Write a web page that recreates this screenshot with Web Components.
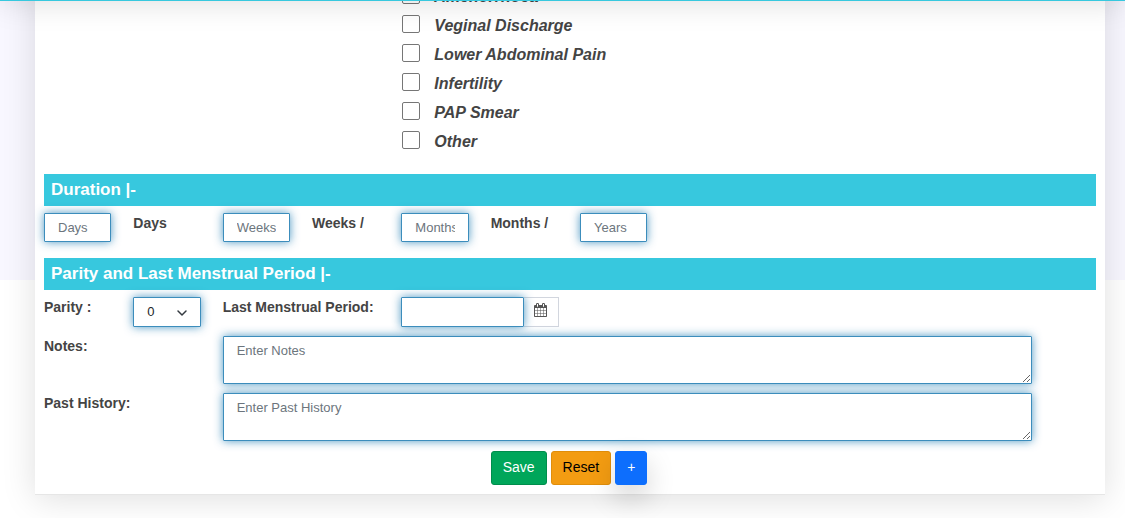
<!DOCTYPE html>
<html lang="en">
<head>
<meta charset="utf-8">
<title>Patient history</title>
<style>
body{margin:0;font:14px/20px "Liberation Sans",Arial,sans-serif;color:#444;background:linear-gradient(#f8f7ff,#f8f7ff) 0 0/100% 280px no-repeat #fff;overflow-x:hidden;
--accent:#37c8de;--field:#3c8dbc;--glow:0 0 10px rgba(60,141,188,.9)}
</style>
</head>
<body>
<page-header></page-header>
<record-card>
  <symptom-list>
    <check-item>Amenorrhoea</check-item>
    <check-item>Veginal Discharge</check-item>
    <check-item>Lower Abdominal Pain</check-item>
    <check-item>Infertility</check-item>
    <check-item>PAP Smear</check-item>
    <check-item>Other</check-item>
  </symptom-list>
  <section-bar>Duration |-</section-bar>
  <form-row>
    <unit-field placeholder="Days" label="Days"></unit-field>
    <unit-field placeholder="Weeks" label="Weeks /"></unit-field>
    <unit-field placeholder="Months" label="Months /"></unit-field>
    <unit-field placeholder="Years"></unit-field>
  </form-row>
  <section-bar>Parity and Last Menstrual Period |-</section-bar>
  <form-row>
    <parity-field></parity-field>
    <date-field></date-field>
    <note-field label="Notes:" placeholder="Enter Notes"></note-field>
    <note-field label="Past History:" placeholder="Enter Past History"></note-field>
    <form-actions>
      <action-button kind="save">Save</action-button>
      <action-button kind="reset">Reset</action-button>
      <action-button kind="add">+</action-button>
    </form-actions>
  </form-row>
</record-card>
<script>
const control = `
  *{box-sizing:border-box}
  label{font-weight:700;white-space:nowrap}
  input,select,textarea{display:block;width:100%;min-width:0;margin:0;border:1px solid var(--field);border-radius:1px;background:#fff;box-shadow:var(--glow);font:13px/20px "Liberation Sans",Arial,sans-serif;color:#212529;padding:4px 13px;outline:0}
  input,select{height:30px}
  ::placeholder{color:#6c757d;opacity:1}`;

function element(name, css, html) {
  customElements.define(name, class extends HTMLElement {
    connectedCallback() {
      if (this.shadowRoot) return;
      const root = this.attachShadow({mode: 'open'});
      root.innerHTML = `<style>${css}</style>${typeof html === 'function' ? html(this) : html}`;
    }
  });
}

element('page-header', `
  :host{display:block;position:fixed;z-index:2;left:0;right:0;bottom:calc(100% - 1px);height:80px;background:var(--accent);box-shadow:0 0 32px rgba(0,0,0,.15)}`, '');

element('record-card', `
  :host{display:block;margin:0 20px 24px 35px;padding:0 9px 9px;background:#fff;border-bottom:1px solid #e6e6e6;box-shadow:0 4px 32px rgba(0,0,0,.13)}`, '<slot></slot>');

element('symptom-list', `
  :host{display:grid;grid-template-columns:repeat(12,minmax(0,1fr));column-gap:22px;padding:0 2px 19px 0;margin-top:-19px}
  div{grid-column:5/span 5}`, '<div role="group"><slot></slot></div>');

element('check-item', `
  :host{display:block}
  label{display:flex;align-items:center;height:29px;gap:14px;padding-left:1px;font:italic 700 16px/24px "Liberation Sans",Arial,sans-serif}
  input{appearance:none;box-sizing:border-box;width:18px;height:18px;margin:0 0 2px;border:1px solid #767676;border-radius:2px;background:#fff}
  input:checked{background:var(--accent)}
  span{padding-top:2px}`, '<label><input type="checkbox"><span><slot></slot></span></label>');

element('section-bar', `
  :host{display:block;background:var(--accent);color:#fff}
  h2{margin:0;padding:4px 7px;font:700 17px/24px "Liberation Sans",Arial,sans-serif}`, '<h2><slot></slot></h2>');

element('form-row', `
  :host{display:grid;grid-template-columns:repeat(12,minmax(0,1fr));gap:9px 22px;align-items:start;padding:7px 2px 0 0}
  :host(:not(:last-of-type)){padding-bottom:15px}`, '<slot></slot>');

element('unit-field', control + `:host{display:contents} input{height:29px;margin-bottom:1px}`, h => {
  const label = h.getAttribute('label'), text = h.getAttribute('placeholder');
  return `<input id="value" type="text" inputmode="numeric" placeholder="${text}" ${label ? '' : `aria-label="${text}"`}>` +
    (label ? `<label for="value">${label}</label>` : '');
});

element('parity-field', control + `
  :host{display:contents}
  .box{position:relative}
  select{appearance:none}
  svg{position:absolute;right:13px;top:10px;pointer-events:none}`, `
  <label for="parity">Parity :</label>
  <div class="box"><select id="parity"><option>0</option><option>1</option><option>2</option><option>3</option><option>4</option></select>
  <svg width="12" height="12" viewBox="0 0 12 12" fill="none" stroke="#343a40" stroke-width="1.500" stroke-linecap="round" stroke-linejoin="round"><path d="m2 4 4 4 4-4"/></svg></div>`);

element('date-field', control + `
  :host{display:contents}
  label{grid-column:span 2}
  .group{grid-column:span 8;display:grid;grid-template-columns:repeat(8,minmax(0,1fr));column-gap:22px}
  .pair{grid-column:span 2;display:flex;margin-right:-1px}
  button{flex:none;width:35px;height:30px;margin:0;padding:0 0 4px;border:1px solid #d2d6de;border-left:0;background:#fff;display:grid;place-items:center;color:#555}
  input{position:relative}`, `
  <label for="date">Last Menstrual Period:</label>
  <div class="group"><div class="pair"><input id="date" type="text"><button type="button" aria-label="Open calendar">
  <svg width="13" height="14" viewBox="0 0 1664 1792" fill="currentColor"><path d="M128 1664h288v-288H128zm352 0h320v-288H480zm-352-352h288V992H128zm352 0h320V992H480zM128 928h288V640H128zm736 736h320v-288H864zM480 928h320V640H480zm768 736h288v-288h-288zm-384-352h320V992H864zM512 448V160q0-13-9.500-22.500T480 128h-64q-13 0-22.500 9.500T384 160v288q0 13 9.500 22.500T416 480h64q13 0 22.500-9.500T512 448zm736 864h288V992h-288zM864 928h320V640H864zm384 0h288V640h-288zm32-480V160q0-13-9.500-22.500T1248 128h-64q-13 0-22.500 9.500T1152 160v288q0 13 9.500 22.500t22.500 9.500h64q13 0 22.500-9.500t9.500-22.500zm384-64v1280q0 52-38 90t-90 38H128q-52 0-90-38t-38-90V384q0-52 38-90t90-38h128v-96q0-66 47-113T416 0h64q66 0 113 47t47 113v96h384v-96q0-66 47-113t113-47h64q66 0 113 47t47 113v96h128q52 0 90 38t38 90z"/></svg></button></div></div>`);

element('note-field', control + `
  :host{display:contents}
  label{grid-column:span 2}
  .area{grid-column:span 10;padding-right:62px}
  textarea{height:48px;resize:vertical}`, h => `
  <label for="note">${h.getAttribute('label')}</label>
  <div class="area"><textarea id="note" placeholder="${h.getAttribute('placeholder')}"></textarea></div>`);

element('form-actions', `
  :host{grid-column:6/-1;display:flex;gap:4px;padding-top:1px}`, '<slot></slot>');

element('action-button', `
  :host{display:block}
  button{box-sizing:border-box;height:34px;margin:0;padding:0 11px 2px;border:1px solid;border-radius:3px;font:14px/20px "Liberation Sans",Arial,sans-serif;cursor:pointer}
  .save{background:#00a65a;border-color:#008d4c;color:#fff}
  .reset{background:#f39c12;border-color:#e08e0b;color:#000}
  .add{background:#0d6efd;border-color:#0d6efd;color:#fff;box-shadow:0 12px 28px rgba(0,0,0,.175)}`,
  h => `<button type="button" class="${h.getAttribute('kind')}"><slot></slot></button>`);
</script>
</body>
</html>
